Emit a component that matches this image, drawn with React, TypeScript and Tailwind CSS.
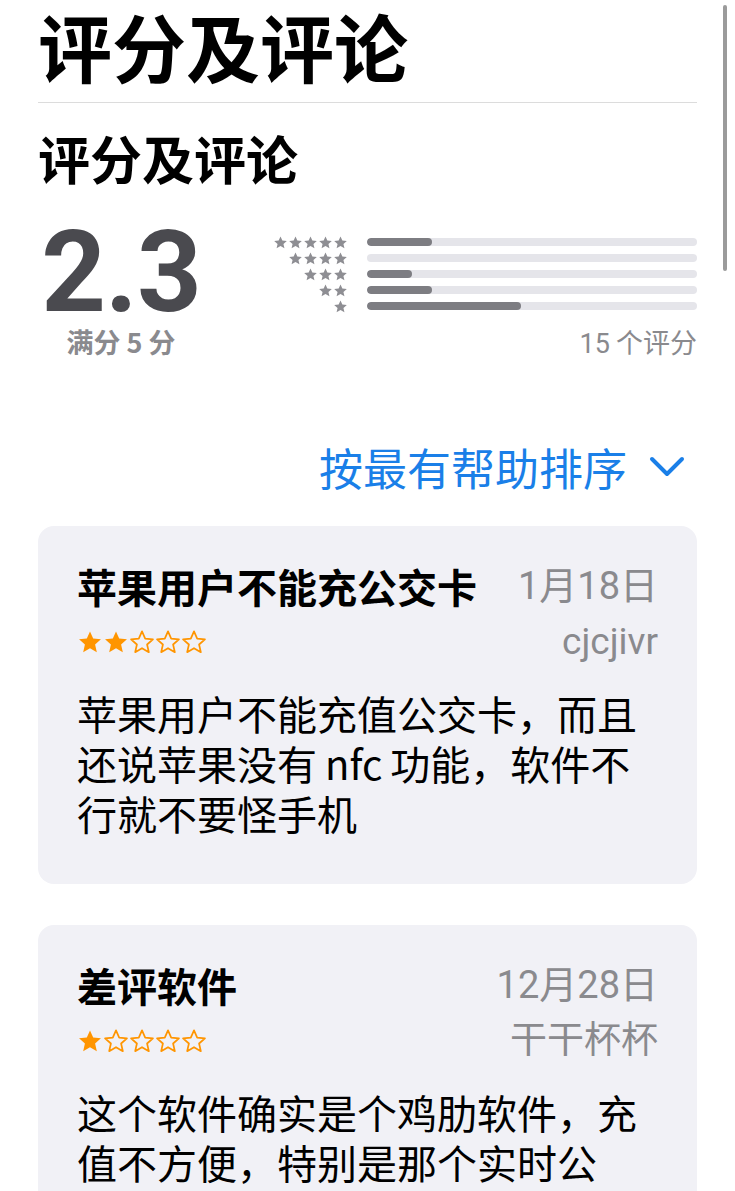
const CJK = "font-['Noto_Sans_CJK_SC',sans-serif]";

const bars = [
  { stars: 5, fill: 65 },
  { stars: 4, fill: 0 },
  { stars: 3, fill: 45 },
  { stars: 2, fill: 65 },
  { stars: 1, fill: 154 },
];

function Star({ filled, size, className }: { filled: boolean; size: number; className?: string }) {
  return (
    <svg width={size} height={size} viewBox="0 0 24 24" className={className}>
      <path
        d="M12 2.2l2.95 6.6 7.15.7-5.4 4.8 1.6 7.05L12 17.7l-6.3 3.65 1.6-7.05-5.4-4.8 7.15-.7z"
        fill={filled ? 'currentColor' : 'none'}
        stroke="currentColor"
        strokeWidth={filled ? 0 : 1.6}
        strokeLinejoin="round"
      />
    </svg>
  );
}

interface Review {
  title: string;
  date: string;
  author: string;
  rating: number;
  body: string[];
}

const reviews: Review[] = [
  {
    title: '苹果用户不能充公交卡',
    date: '1月18日',
    author: 'cjcjivr',
    rating: 2,
    body: ['苹果用户不能充值公交卡，而且', '还说苹果没有\u2009nfc\u2009功能，软件不', '行就不要怪手机'],
  },
  {
    title: '差评软件',
    date: '12月28日',
    author: '干干杯杯',
    rating: 1,
    body: ['这个软件确实是个鸡肋软件，充', '值不方便，特别是那个实时公', '交也不准确'],
  },
];

function ReviewCard({ review }: { review: Review }) {
  return (
    <div className="rounded-[16px] bg-[#f1f1f6] px-[39px] pt-[36px] pb-[46px]">
      <div className="flex items-center justify-between">
        <h3 className={`${CJK} text-[40px] font-bold leading-[48px] text-black`}>{review.title}</h3>
        <span className={`font-['Roboto','Noto_Sans_CJK_SC',sans-serif] text-[38px] leading-[48px] text-[#8a8a8e]`}>
          {review.date}
        </span>
      </div>
      <div className="mt-[10px] flex items-center justify-between">
        <div className="flex text-[#ff9500]">
          {[0, 1, 2, 3, 4].map((i) => (
            <Star key={i} filled={i < review.rating} size={26} />
          ))}
        </div>
        <span className={`font-['Roboto','Noto_Sans_CJK_SC',sans-serif] text-[37px] leading-[44px] text-[#8a8a8e]`}>
          {review.author}
        </span>
      </div>
      <div className={`${CJK} mt-[24px] text-[40px] leading-[50px] text-black`}>
        {review.body.map((line, i) => (
          <p key={i}>{line}</p>
        ))}
      </div>
    </div>
  );
}

export default function App() {
  return (
    <div className="relative h-[1191px] w-[735px] overflow-hidden bg-white">
      <div className="absolute right-[8px] top-[5px] h-[266px] w-[4px] rounded-full bg-[#9b9b9b]" />
      <div className="px-[38px]">
        <h1 className={`${CJK} text-[74px] font-bold leading-[90px] text-black`}>评分及评论</h1>
        <div className="mt-[12px] h-px bg-[#dcdcdc]" />
        <h2 className={`${CJK} mt-[24px] text-[52px] font-bold leading-[62px] text-black`}>评分及评论</h2>

        <div className="mt-[36px] flex items-start">
          <div className="flex w-[166px] flex-col items-center">
            <div className="font-['Roboto',sans-serif] text-[113px] font-bold leading-[96px] tracking-[-1px] text-[#4a4a4f]">
              2.3
            </div>
            <div className={`${CJK} mt-[5px] text-[27px] font-semibold leading-[32px] text-[#8a8a8e]`}>满分 5 分</div>
          </div>
          <div className="flex flex-1 flex-col">
            <div className="mt-[11px] flex flex-col gap-[4px] pl-[66px]">
              {bars.map((b) => (
                <div key={b.stars} className="flex h-[12px] items-center gap-[19px]">
                  <div className="flex w-[78px] justify-end text-[#8e8e93]">
                    {Array.from({ length: b.stars }).map((_, i) => (
                      <Star key={i} filled size={15} />
                    ))}
                  </div>
                  <div className="h-[8px] flex-1 overflow-hidden rounded-full bg-[#e5e5ea]">
                    <div className="h-full rounded-full bg-[#7d7d82]" style={{ width: `${b.fill}px` }} />
                  </div>
                </div>
              ))}
            </div>
            <div className={`${CJK} mt-[14px] text-right text-[27px] leading-[32px] text-[#8a8a8e]`}>
              <span className="font-['Roboto',sans-serif]">15</span> 个评分
            </div>
          </div>
        </div>

        <div className="mt-[81px] flex items-center justify-end gap-[22px] pr-[12px]">
          <span className={`${CJK} text-[44px] leading-[52px] text-[#1a7fe8]`}>按最有帮助排序</span>
          <svg width="36" height="22" viewBox="0 0 36 22" fill="none">
            <path d="M3 3l15 15L33 3" stroke="#1a7fe8" strokeWidth="4" strokeLinecap="round" strokeLinejoin="round" />
          </svg>
        </div>

        <div className="mt-[33px] flex flex-col gap-[41px]">
          {reviews.map((r) => (
            <ReviewCard key={r.title} review={r} />
          ))}
        </div>
      </div>
    </div>
  );
}
